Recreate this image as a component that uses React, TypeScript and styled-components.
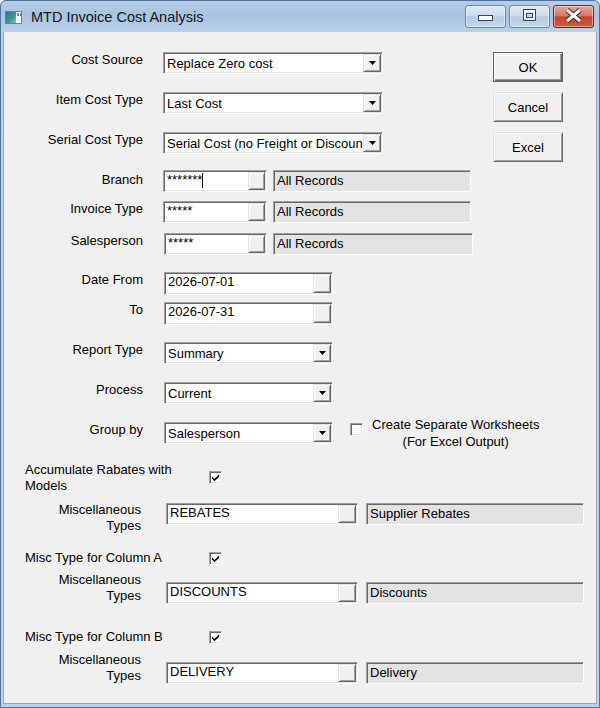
import React from 'react';
import styled, { createGlobalStyle, css } from 'styled-components';

const GlobalStyle = createGlobalStyle`
  html, body {
    margin: 0;
    padding: 0;
    background: #f0f0f0;
  }
  body {
    font-family: "Liberation Sans", Arial, sans-serif;
    font-size: 13px;
    color: #000;
  }
`

const sunken = css`
  box-sizing: border-box;
  border: 1px solid;
  border-color: #a0a0a0 #ffffff #ffffff #a0a0a0;
  box-shadow: inset 1px 1px 0 #696969, inset -1px -1px 0 #e3e3e3;
`

const raised = css`
  box-sizing: border-box;
  border: 1px solid;
  border-color: #e3e3e3 #696969 #696969 #e3e3e3;
  box-shadow: inset 1px 1px 0 #ffffff, inset -1px -1px 0 #a0a0a0;
  background: #f0f0f0;
`

const Window = styled.div`
  box-sizing: border-box;
  width: 600px;
  height: 708px;
  display: flex;
  flex-direction: column;
  border: 1px solid #52739a;
  border-radius: 6px 6px 0 0;
  padding: 0 2px 3px 2px;
  background: linear-gradient(to bottom, #b5cce6 0px, #a9c3e1 14px, #b9d0ea 31px, #bcd2ea 100%);
`

const TitleBar = styled.div`
  height: 31px;
  flex-shrink: 0;
  display: flex;
  align-items: flex-start;
  padding-left: 2px;
`

const TitleIcon = styled.svg`
  margin-top: 10px;
  flex-shrink: 0;
`

const TitleText = styled.span`
  margin: 8px 0 0 9px;
  font-size: 14.5px;
  line-height: 17px;
  color: #141414;
`

const CaptionButtons = styled.div`
  margin: 4px 3px 0 auto;
  display: flex;
  gap: 3px;
`

const CaptionButton = styled.div<{ $close?: boolean }>`
  box-sizing: border-box;
  width: 41px;
  height: 23px;
  border: 1px solid ${p => (p.$close ? '#6a2a20' : '#6a86a8')};
  border-radius: 3px;
  background: ${p =>
    p.$close
      ? 'linear-gradient(to bottom, #e8a797 0%, #d67a66 45%, #c3452c 52%, #cd5a3e 100%)'
      : 'linear-gradient(to bottom, #dfe9f5 0%, #cddcee 45%, #b6cbe4 52%, #c0d4ea 100%)'};
  box-shadow: inset 0 0 0 1px rgba(255, 255, 255, 0.45);
  svg {
    display: block;
  }
`

const Client = styled.div`
  flex: 1;
  background: #f0f0f0;
  border: 1px solid #8ea7c4;
  border-top: none;
  padding-top: 20px;
`

const TopSection = styled.div`
  display: flex;
  align-items: flex-start;
`

const FormColumn = styled.div`
  flex: 1;
  display: flex;
  flex-direction: column;
`

const ButtonColumn = styled.div`
  width: 70px;
  margin-right: 33px;
  display: flex;
  flex-direction: column;
  gap: 10px;
`

const PushButton = styled.button<{ $default?: boolean }>`
  ${raised}
  width: 70px;
  height: 30px;
  padding: 0;
  font-family: "Liberation Sans", Arial, sans-serif;
  font-size: 13px;
  color: #000;
  ${p =>
    p.$default &&
    css`
      border-color: #646464;
      box-shadow: inset 1px 1px 0 #ffffff, inset -1px -1px 0 #696969, inset -2px -2px 0 #a0a0a0;
    `}
`

const Row = styled.div<{ $mt?: number; $pl?: number }>`
  display: flex;
  align-items: flex-start;
  margin-top: ${p => p.$mt ?? 0}px;
  padding-left: ${p => p.$pl ?? 0}px;
`

const FieldLabel = styled.div<{ $w?: number; $gap?: number; $left?: boolean; $top?: number }>`
  width: ${p => p.$w ?? 139}px;
  margin-right: ${p => p.$gap ?? 20}px;
  padding-top: ${p => p.$top ?? 0}px;
  flex-shrink: 0;
  text-align: ${p => (p.$left ? 'left' : 'right')};
  line-height: 16px;
  white-space: nowrap;
`

const Controls = styled.div<{ $mt?: number; $gap?: number }>`
  display: flex;
  align-items: flex-start;
  gap: ${p => p.$gap ?? 6}px;
  margin-top: ${p => p.$mt ?? 0}px;
`

const Combo = styled.div<{ $w: number }>`
  ${sunken}
  width: ${p => p.$w}px;
  height: 22px;
  background: #fff;
  display: flex;
  align-items: stretch;
`

const FieldText = styled.div<{ $pt?: number }>`
  flex: 1;
  min-width: 0;
  padding: ${p => p.$pt ?? 1}px 0 0 3px;
  line-height: 16px;
  overflow: hidden;
  white-space: nowrap;
`

const ArrowButton = styled.div`
  ${raised}
  width: 18px;
  margin: 1px 1px 1px 0;
  display: flex;
  align-items: center;
  justify-content: center;
  flex-shrink: 0;
`

const TextField = styled.div<{ $w: number; $h?: number }>`
  ${sunken}
  width: ${p => p.$w}px;
  height: ${p => p.$h ?? 22}px;
  background: #fff;
  display: flex;
  align-items: stretch;
`

const LookupButton = styled.div<{ $w?: number }>`
  ${raised}
  width: ${p => p.$w ?? 17}px;
  margin: 1px 1px 1px 0;
  flex-shrink: 0;
`

const Caret = styled.span`
  display: inline-block;
  width: 1px;
  height: 15px;
  background: #000;
  vertical-align: top;
  margin-top: 1px;
`

const DisplayBox = styled.div<{ $w: number }>`
  ${sunken}
  width: ${p => p.$w}px;
  height: 22px;
  background: #e3e3e3;
  padding: 2px 0 0 3px;
  line-height: 16px;
  white-space: nowrap;
  overflow: hidden;
`

const CheckBox = styled.div<{ $mt?: number }>`
  ${sunken}
  width: 13px;
  height: 13px;
  margin-top: ${p => p.$mt ?? 0}px;
  background: #fff;
  flex-shrink: 0;
  display: flex;
  align-items: center;
  justify-content: center;
`

const CheckOption = styled.div`
  display: flex;
  align-items: flex-start;
  gap: 9px;
  margin-left: 17px;
`

const CheckCaption = styled.div`
  margin-top: -6px;
  text-align: center;
  line-height: 17px;
`

const DownArrow = () => (
  <svg width="7" height="4" viewBox="0 0 7 4">
    <polygon points="0,0 7,0 3.5,4" fill="#000" />
  </svg>
)

const Check = () => (
  <svg width="7" height="7" viewBox="0 0 7 7">
    <polygon points="0,2.5 2.5,5 7,0.5 7,3 2.5,7.2 0,4.8" fill="#000" />
  </svg>
)

interface ComboProps {
  value: string
  width: number
}

const ComboBox = ({ value, width }: ComboProps) => (
  <Combo $w={width}>
    <FieldText $pt={3}>{value}</FieldText>
    <ArrowButton>
      <DownArrow />
    </ArrowButton>
  </Combo>
)

interface LookupProps {
  value: React.ReactNode
  width: number
  height?: number
  buttonWidth?: number
}

const Lookup = ({ value, width, height, buttonWidth }: LookupProps) => (
  <TextField $w={width} $h={height}>
    <FieldText>{value}</FieldText>
    <LookupButton $w={buttonWidth} />
  </TextField>
)

interface MiscRowProps {
  mt: number
  inputTop: number
  code: string
  desc: string
}

const MiscTypesRow = ({ mt, inputTop, code, desc }: MiscRowProps) => (
  <Row $mt={mt}>
    <FieldLabel $w={137} $gap={25}>
      Miscellaneous
      <br />
      Types
    </FieldLabel>
    <Controls $mt={inputTop} $gap={8}>
      <Lookup value={code} width={192} buttonWidth={18} />
      <DisplayBox $w={218}>{desc}</DisplayBox>
    </Controls>
  </Row>
)

export default function App() {
  return (
    <>
      <GlobalStyle />
      <Window>
        <TitleBar>
          <TitleIcon width="17" height="13" viewBox="0 0 17 13">
            <defs>
              <linearGradient id="ti" x1="0" y1="0" x2="1" y2="1">
                <stop offset="0" stopColor="#2f6ea8" />
                <stop offset="0.6" stopColor="#3f9a8a" />
                <stop offset="1" stopColor="#8cc7a0" />
              </linearGradient>
            </defs>
            <rect x="0.5" y="0.5" width="16" height="12" fill="#f4f7fa" stroke="#6a7f96" />
            <rect x="1" y="1" width="10" height="11" fill="url(#ti)" />
            <rect x="12" y="2" width="2" height="3" fill="#7d8fa3" />
            <rect x="15" y="2" width="1" height="3" fill="#7d8fa3" />
          </TitleIcon>
          <TitleText>MTD Invoice Cost Analysis</TitleText>
          <CaptionButtons>
            <CaptionButton>
              <svg width="39" height="21" viewBox="0 0 39 21">
                <rect x="12.5" y="9.5" width="14" height="5" fill="#fff" stroke="#34465c" />
              </svg>
            </CaptionButton>
            <CaptionButton>
              <svg width="39" height="21" viewBox="0 0 39 21">
                <rect x="13.5" y="3.5" width="12" height="11" fill="none" stroke="#34465c" />
                <rect x="15" y="5" width="9" height="8" fill="none" stroke="#fff" strokeWidth="2" />
                <rect x="16.5" y="7.5" width="6" height="4" fill="#c6d6ea" stroke="#34465c" />
              </svg>
            </CaptionButton>
            <CaptionButton $close>
              <svg width="39" height="21" viewBox="0 0 39 21">
                <path d="M13 4 L26 15 M26 4 L13 15" stroke="#5a1c12" strokeWidth="5" />
                <path d="M13 4 L26 15 M26 4 L13 15" stroke="#fff" strokeWidth="3" />
              </svg>
            </CaptionButton>
          </CaptionButtons>
        </TitleBar>

        <Client>
          <TopSection>
            <FormColumn>
              <Row>
                <FieldLabel>Cost Source</FieldLabel>
                <ComboBox value="Replace Zero cost" width={220} />
              </Row>
              <Row $mt={18}>
                <FieldLabel>Item Cost Type</FieldLabel>
                <ComboBox value="Last Cost" width={220} />
              </Row>
              <Row $mt={18}>
                <FieldLabel>Serial Cost Type</FieldLabel>
                <ComboBox value="Serial Cost (no Freight or Discount)" width={220} />
              </Row>
            </FormColumn>
            <ButtonColumn>
              <PushButton $default>OK</PushButton>
              <PushButton>Cancel</PushButton>
              <PushButton>Excel</PushButton>
            </ButtonColumn>
          </TopSection>

          <Row $mt={8}>
            <FieldLabel $top={2}>Branch</FieldLabel>
            <Controls>
              <Lookup value={<>*******<Caret /></>} width={104} />
              <DisplayBox $w={198}>All Records</DisplayBox>
            </Controls>
          </Row>
          <Row $mt={9}>
            <FieldLabel>Invoice Type</FieldLabel>
            <Controls>
              <Lookup value="*****" width={104} />
              <DisplayBox $w={198}>All Records</DisplayBox>
            </Controls>
          </Row>
          <Row $mt={10}>
            <FieldLabel $gap={21}>Salesperson</FieldLabel>
            <Controls>
              <Lookup value="*****" width={103} />
              <DisplayBox $w={200}>All Records</DisplayBox>
            </Controls>
          </Row>

          <Row $mt={17}>
            <FieldLabel $gap={21}>Date From</FieldLabel>
            <Lookup value="2026-07-01" width={169} height={23} buttonWidth={18} />
          </Row>
          <Row $mt={7}>
            <FieldLabel $gap={21}>To</FieldLabel>
            <Lookup value="2026-07-31" width={169} height={23} buttonWidth={18} />
          </Row>

          <Row $mt={17}>
            <FieldLabel $gap={21}>Report Type</FieldLabel>
            <ComboBox value="Summary" width={169} />
          </Row>
          <Row $mt={18}>
            <FieldLabel $gap={21}>Process</FieldLabel>
            <ComboBox value="Current" width={169} />
          </Row>
          <Row $mt={18}>
            <FieldLabel $gap={21}>Group by</FieldLabel>
            <ComboBox value="Salesperson" width={169} />
            <CheckOption>
              <CheckBox $mt={1} />
              <CheckCaption>
                Create Separate Worksheets
                <br />
                (For Excel Output)
              </CheckCaption>
            </CheckOption>
          </Row>

          <Row $mt={12} $pl={21}>
            <FieldLabel $w={184} $gap={0} $left>
              Accumulate Rabates with
              <br />
              Models
            </FieldLabel>
            <CheckBox $mt={9}>
              <Check />
            </CheckBox>
          </Row>
          <MiscTypesRow mt={8} inputTop={1} code="REBATES" desc="Supplier Rebates" />

          <Row $mt={16} $pl={21}>
            <FieldLabel $w={184} $gap={0} $left>
              Misc Type for Column A
            </FieldLabel>
            <CheckBox $mt={2}>
              <Check />
            </CheckBox>
          </Row>
          <MiscTypesRow mt={6} inputTop={10} code="DISCOUNTS" desc="Discounts" />

          <Row $mt={25} $pl={21}>
            <FieldLabel $w={184} $gap={0} $left>
              Misc Type for Column B
            </FieldLabel>
            <CheckBox $mt={2}>
              <Check />
            </CheckBox>
          </Row>
          <MiscTypesRow mt={7} inputTop={10} code="DELIVERY" desc="Delivery" />
        </Client>
      </Window>
    </>
  )
}
